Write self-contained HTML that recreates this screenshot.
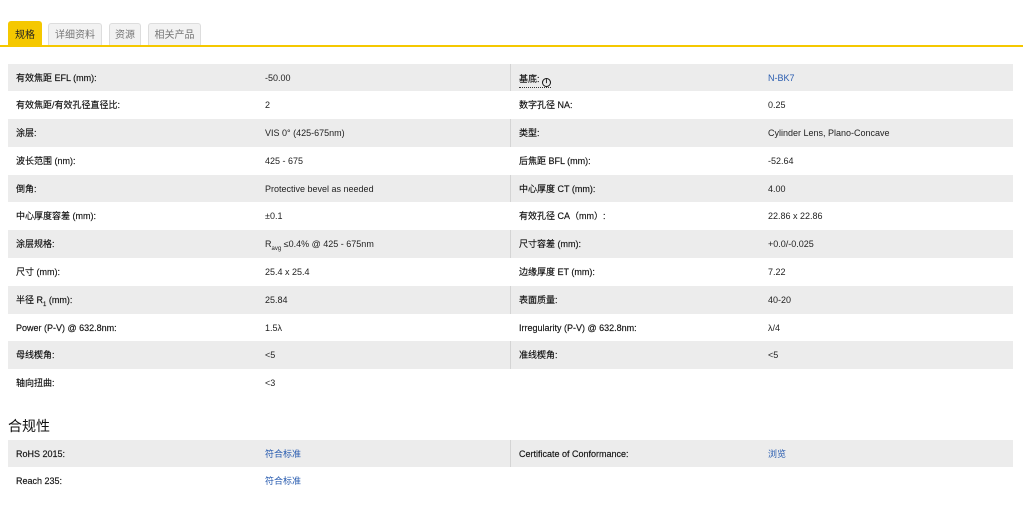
<!DOCTYPE html>
<html><head><meta charset="utf-8"><style>
body{margin:0;background:#fff;font-family:"Liberation Sans","Noto Sans CJK SC",sans-serif;font-size:9px;color:#222;width:1023px;height:518px;overflow:hidden;position:relative}
.tabs{position:absolute;left:8px;top:21px;height:25px}
.tab{position:absolute;top:2px;height:23px;line-height:23px;background:#f2f2f2;border:1px solid #ddd;border-bottom:none;border-radius:3px 3px 0 0;color:#777;font-size:10px;text-align:center;box-sizing:border-box}
.tab.on{background:#f5c800;color:#222;border-color:#f5c800;top:0;height:25px;line-height:27px}
.line{position:absolute;left:0;top:45px;width:1023px;height:2px;background:#f5c800}
.tbl{position:absolute;left:8px;width:1005px}
.row{height:27.8px;position:relative}
.row.g{background:#ececec}
.row span{position:absolute;top:0;line-height:28.6px;white-space:nowrap}
.a,.c{color:#111;-webkit-text-stroke:0.15px #111}
.a{left:8px}.b{left:257px}.c{left:511px}.d{left:760px}
.row.g .sep{position:absolute;left:502px;top:0;width:1px;height:100%;background:#d4d4d4}
.lnk{color:#2a5db0}
h3{position:absolute;left:8px;top:416px;margin:0;font-size:14px;font-weight:normal;color:#111}
sub{font-size:6px}
.ic{display:inline-block;width:9px;height:9px;border:1.5px solid #111;border-radius:50%;box-sizing:border-box;font-size:6px;line-height:6px;text-align:center;font-weight:bold;vertical-align:-1px}
</style></head><body>
<div class="tabs">
<div class="tab on" style="left:0;width:34px">规格</div>
<div class="tab" style="left:40px;width:54px">详细资料</div>
<div class="tab" style="left:101px;width:32px">资源</div>
<div class="tab" style="left:140px;width:53px">相关产品</div>
</div>
<div class="line"></div>
<div class="tbl" style="top:63.5px">
<div class="row g"><i class="sep"></i><span class="a">有效焦距 EFL (mm):</span><span class="b">-50.00</span><span class="c" style="border-bottom:1px dotted #333;line-height:14px;top:8px">基底: <b class="ic">i</b></span><span class="d lnk">N-BK7</span></div>
<div class="row"><span class="a">有效焦距/有效孔径直径比:</span><span class="b">2</span><span class="c">数字孔径 NA:</span><span class="d">0.25</span></div>
<div class="row g"><i class="sep"></i><span class="a">涂层:</span><span class="b">VIS 0° (425-675nm)</span><span class="c">类型:</span><span class="d">Cylinder Lens, Plano-Concave</span></div>
<div class="row"><span class="a">波长范围 (nm):</span><span class="b">425 - 675</span><span class="c">后焦距 BFL (mm):</span><span class="d">-52.64</span></div>
<div class="row g"><i class="sep"></i><span class="a">倒角:</span><span class="b">Protective bevel as needed</span><span class="c">中心厚度 CT (mm):</span><span class="d">4.00</span></div>
<div class="row"><span class="a">中心厚度容差 (mm):</span><span class="b">±0.1</span><span class="c">有效孔径 CA（mm）:</span><span class="d">22.86 x 22.86</span></div>
<div class="row g"><i class="sep"></i><span class="a">涂层规格:</span><span class="b">R<sub>avg</sub> ≤0.4% @ 425 - 675nm</span><span class="c">尺寸容差 (mm):</span><span class="d">+0.0/-0.025</span></div>
<div class="row"><span class="a">尺寸 (mm):</span><span class="b">25.4 x 25.4</span><span class="c">边缘厚度 ET (mm):</span><span class="d">7.22</span></div>
<div class="row g"><i class="sep"></i><span class="a">半径 R<sub>1</sub> (mm):</span><span class="b">25.84</span><span class="c">表面质量:</span><span class="d">40-20</span></div>
<div class="row"><span class="a">Power (P-V) @ 632.8nm:</span><span class="b">1.5λ</span><span class="c">Irregularity (P-V) @ 632.8nm:</span><span class="d">λ/4</span></div>
<div class="row g"><i class="sep"></i><span class="a">母线楔角:</span><span class="b">&lt;5</span><span class="c">准线楔角:</span><span class="d">&lt;5</span></div>
<div class="row"><span class="a">轴向扭曲:</span><span class="b">&lt;3</span></div>
</div>
<h3>合规性</h3>
<div class="tbl" style="top:440px">
<div class="row g" style="height:27px"><i class="sep"></i><span class="a">RoHS 2015:</span><span class="b lnk">符合标准</span><span class="c">Certificate of Conformance:</span><span class="d lnk">浏览</span></div>
<div class="row"><span class="a">Reach 235:</span><span class="b lnk">符合标准</span></div>
</div>
</body></html>
